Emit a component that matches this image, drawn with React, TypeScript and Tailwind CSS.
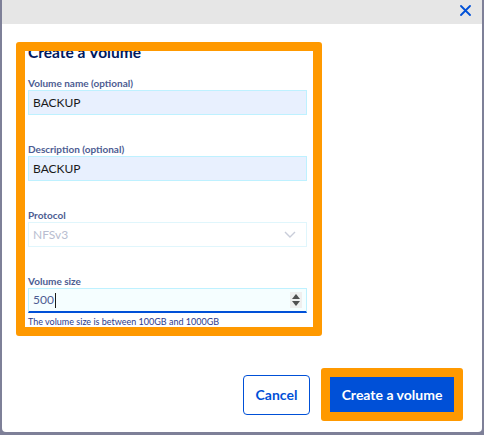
const labelCls = "block text-[10px] leading-[14px] font-bold text-[#4d5c92]";

function CloseIcon() {
  return (
    <svg width="11" height="11" viewBox="0 0 11 11" fill="none" stroke="#0050d7" strokeWidth="1.8" strokeLinecap="round">
      <path d="M1 1L10 10M10 1L1 10" />
    </svg>
  );
}

function Chevron() {
  return (
    <svg width="12" height="7" viewBox="0 0 12 7" fill="none" stroke="#c9cdd9" strokeWidth="1.4">
      <path d="M1 1L6 6L11 1" />
    </svg>
  );
}

function Spinner() {
  return (
    <div className="flex flex-col items-center justify-center gap-[2px] w-[12px] h-[16px] bg-[#efefef]">
      <svg width="8" height="5" viewBox="0 0 8 5"><path d="M4 0L8 5H0Z" fill="#505050" /></svg>
      <svg width="8" height="5" viewBox="0 0 8 5"><path d="M0 0H8L4 5Z" fill="#505050" /></svg>
    </div>
  );
}

export default function App() {
  return (
    <div className="w-[484px] h-[435px] bg-[#7e8098] font-['Lato','Open_Sans',sans-serif] overflow-hidden">
      <div className="ml-[2px] w-[480px] h-[432px] bg-white rounded-b-[4px] flex flex-col">
        {/* header */}
        <div className="h-[24px] bg-[#e6e6e6] flex justify-end items-start pt-[5px] pr-[11px] shrink-0">
          <CloseIcon />
        </div>

        {/* highlighted form */}
        <div className="mt-[18px] ml-[14px] w-[306px] h-[294px] border-[9px] border-[#ff9900] rounded-[3px] overflow-hidden pl-[3px] pr-[6px] shrink-0">
          <h2 className="-mt-[9px] text-[15.5px] leading-[20px] font-bold text-[#00185e]">Create a Volume</h2>

          <label className={`${labelCls} mt-[14px]`}>Volume name (optional)</label>
          <div className="h-[25px] bg-[#e8f0fe] border border-[#bef1ff] flex items-center pl-[4px] text-[12px] text-[#1a1a1a]">
            BACKUP
          </div>

          <label className={`${labelCls} mt-[27px]`}>Description (optional)</label>
          <div className="h-[25px] bg-[#e8f0fe] border border-[#bef1ff] flex items-center pl-[4px] text-[12px] text-[#1a1a1a]">
            BACKUP
          </div>

          <label className={`${labelCls} mt-[27px]`}>Protocol</label>
          <div className="h-[25px] bg-white border border-[#e0f6fc] flex items-center justify-between pl-[4px] pr-[10px] text-[12px] text-[#b8bdd0]">
            <span>NFSv3</span>
            <Chevron />
          </div>

          <label className={`${labelCls} mt-[27px]`}>Volume size</label>
          <div className="h-[25px] bg-[#f5feff] border border-[#bef1ff] border-b-2 border-b-[#0050d7] flex items-center justify-between pl-[4px] pr-[4px] text-[12px] text-[#4d5c92]">
            <span className="flex items-center">
              500
              <span className="ml-[1px] w-px h-[15px] bg-[#1a1a1a]" />
            </span>
            <Spinner />
          </div>
          <p className="mt-[3px] text-[9px] leading-[12px] text-[#2b3a8c]">The volume size is between 100GB and 1000GB</p>
        </div>

        {/* footer */}
        <div className="mt-auto flex justify-end items-center gap-[11px] pr-[19px] pb-[11px]">
          <button className="w-[67px] h-[40px] border border-[#0050d7] rounded-[4px] bg-white text-[#0050d7] text-[14px] font-bold">
            Cancel
          </button>
          <div className="border-[9px] border-[#ff9900] rounded-[3px]">
            <button className="w-[124px] h-[35px] bg-[#0050d7] text-white text-[14px] font-bold block">
              Create a volume
            </button>
          </div>
        </div>
      </div>
    </div>
  );
}
